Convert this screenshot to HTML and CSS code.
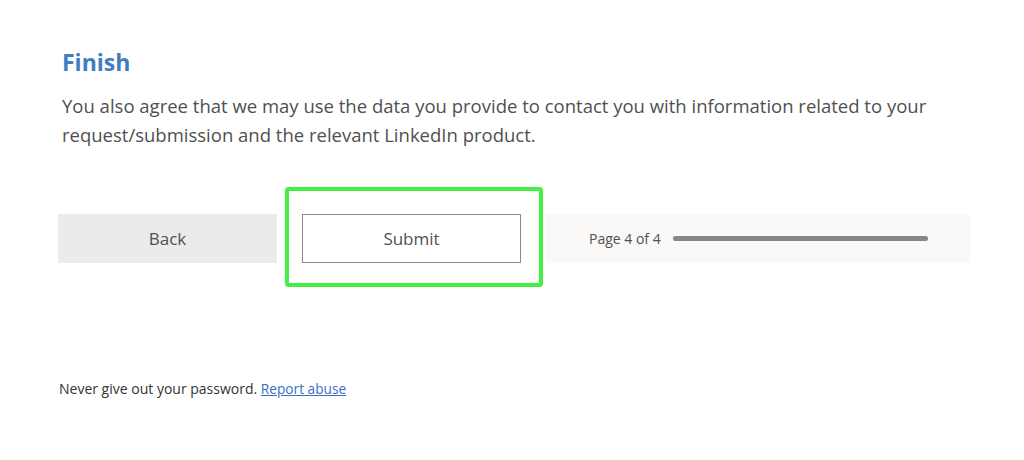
FILE: index.html
```html
<!DOCTYPE html>
<html lang="en">
<head>
<meta charset="utf-8">
<title>Finish</title>
<link rel="stylesheet" href="styles.css">
</head>
<body>
<main class="page">
  <section class="intro">
    <h1 class="title">Finish</h1>
    <p class="desc">You also agree that we may use the data you provide to contact you with information related to your request/submission and the relevant LinkedIn product.</p>
  </section>
  <div class="nav-row">
    <button class="btn btn-back" type="button">Back</button>
    <div class="submit-wrap">
      <button class="btn btn-submit" type="submit">Submit</button>
      <span class="highlight"></span>
    </div>
    <div class="progress">
      <span class="progress-label">Page 4 of 4</span>
      <span class="progress-track"><span class="progress-fill" style="width:100%"></span></span>
    </div>
  </div>
  <footer class="footer">
    <span>Never give out your password.</span>
    <a class="link" href="#">Report abuse</a>
  </footer>
</main>
</body>
</html>
```

FILE: styles.css
```css
html, body {
  margin: 0;
  padding: 0;
  background: #ffffff;
}
body {
  font-family: "Open Sans", "Noto Sans", "Liberation Sans", sans-serif;
  color: #505050;
}
.page {
  padding: 0 53px 0 58px;
}
.intro {
  padding: 47px 0 0 4px;
}
.title {
  margin: 0;
  font-size: 23px;
  line-height: 30px;
  font-weight: 700;
  color: #3f7ebe;
}
.desc {
  margin: 14px 0 0;
  font-size: 18.5px;
  line-height: 29px;
  color: #505050;
  max-width: 890px;
}
.nav-row {
  display: flex;
  align-items: stretch;
  height: 49px;
  margin-top: 65px;
}
.btn {
  font-family: inherit;
  font-size: 17px;
  color: #505050;
  cursor: pointer;
  margin: 0;
}
.btn-back {
  width: 219px;
  border: none;
  background: #ebebeb;
}
.submit-wrap {
  position: relative;
  width: 268px;
  display: flex;
  justify-content: center;
  padding-left: 1px;
  box-sizing: border-box;
}
.btn-submit {
  width: 219px;
  height: 49px;
  background: #ffffff;
  border: 1px solid #8a8a8a;
}
.highlight {
  position: absolute;
  left: 8px;
  right: 2px;
  top: -27px;
  bottom: -24px;
  border: 4px solid #44ee44;
  border-radius: 4px;
  box-shadow: 0 0 1px rgba(0,0,0,0.3);
  pointer-events: none;
}
.progress {
  flex: 1;
  background: #faf9f8;
  display: flex;
  align-items: center;
  padding: 0 43px 0 44px;
}
.progress-label {
  font-size: 14px;
  color: #505050;
  white-space: nowrap;
}
.progress-track {
  flex: 1;
  height: 5px;
  margin-left: 12px;
  border-radius: 3px;
  background: #e1dfdd;
  display: flex;
}
.progress-fill {
  display: block;
  height: 5px;
  border-radius: 3px;
  background: #8a8886;
}
.footer {
  margin-top: 116px;
  padding-left: 1px;
  font-size: 14px;
  color: #333333;
}
.link {
  color: #3a6fc4;
  font-size: 13.7px;
}
```
